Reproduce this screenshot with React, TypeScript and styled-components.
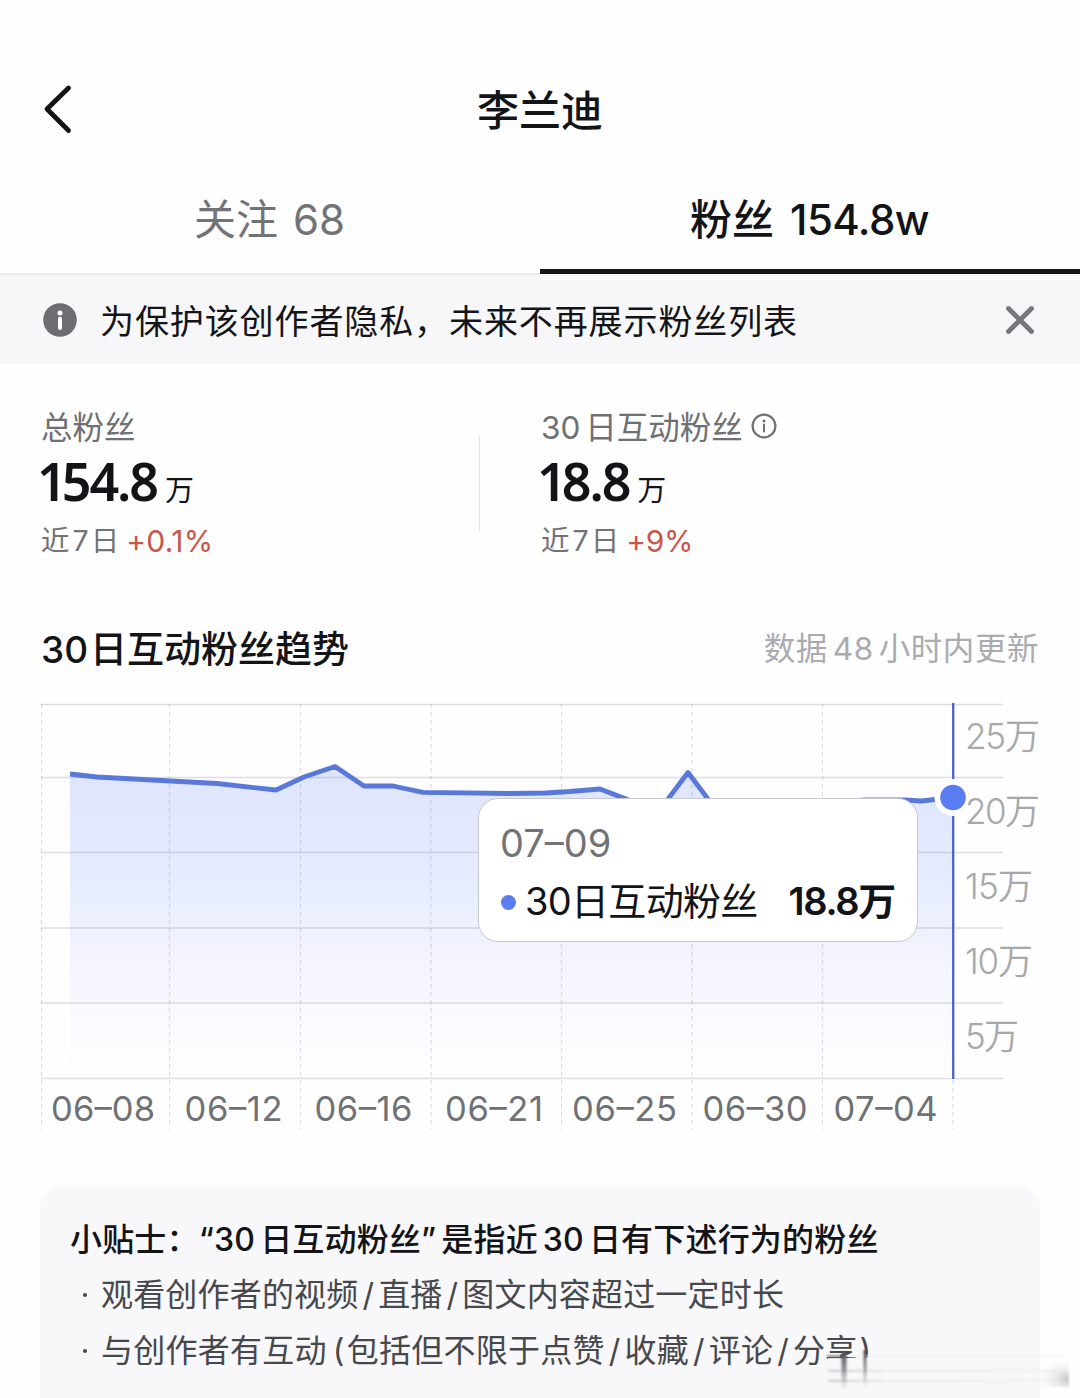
import React from "react";
import styled, { createGlobalStyle } from "styled-components";

const GlobalStyle = createGlobalStyle`
  * { box-sizing: border-box; }
  body {
    margin: 0;
    background: #fefefe;
    font-family: Inter, "Noto Sans CJK SC", sans-serif;
    color: #161823;
  }
`;

const Page = styled.main`
  width: 1080px;
  height: 1398px;
  display: flex;
  flex-direction: column;
  position: relative;
  overflow: hidden;
`;

/* Single line of text with tunable size, weight and tracking. */
const Text = styled.span<{ $size: number; $color?: string; $weight?: number; $track?: number }>`
  font-size: ${(p) => p.$size}px;
  color: ${(p) => p.$color ?? "#131418"};
  font-weight: ${(p) => p.$weight ?? 400};
  letter-spacing: ${(p) => p.$track ?? 0}px;
  line-height: 1;
  white-space: pre;
`;

const BigNumber = styled.span`
  font-family: "Noto Sans", "Open Sans", sans-serif;
  font-size: 52px;
  font-weight: 600;
  line-height: 62px;
  letter-spacing: -2.1px;
  margin-left: -4px;
  color: #131418;
`;

const LeadDigit = styled.span`
  letter-spacing: -5px;
`;

const Unit = styled.span`
  font-size: 29px;
  line-height: 1;
  margin-left: 8px;
  color: #131418;
`;

const Gap = styled.span<{ $w: number }>`
  display: inline-block;
  width: ${(p) => p.$w}px;
  letter-spacing: 0;
`;

const Header = styled.header`
  height: 174px;
  padding: 44px 43px 0;
  display: grid;
  grid-template-columns: 30px 1fr 30px;
  align-items: center;
  justify-items: center;
`;

const HeaderTitle = styled.h1`
  margin: 4px 0 0;
  font-size: 42px;
  font-weight: 500;
  line-height: 1;
  color: #131418;
`;

const Tabs = styled.nav`
  height: 101px;
  display: grid;
  grid-template-columns: 1fr 1fr;
`;

const Tab = styled.div<{ $active?: boolean }>`
  display: flex;
  align-items: center;
  justify-content: center;
  padding-bottom: ${(p) => (p.$active ? 3 : 7)}px;
  padding-right: 1px;
  border-bottom: ${(p) => (p.$active ? "5px solid #141518" : "2px solid #ececee")};
  margin-bottom: ${(p) => (p.$active ? 1 : 0)}px;
`;

const Notice = styled.section`
  height: 89px;
  background: #f7f7f9;
  padding: 0 45px 0 43px;
  display: flex;
  align-items: center;
`;

const NoticeText = styled.div`
  flex: 1;
  padding: 5px 0 0 23px;
`;

const Stats = styled.section`
  height: 250px;
  padding: 41px 41px 0;
  display: grid;
  grid-template-columns: 438px 62px 1fr;
`;

const Stat = styled.div`
  display: flex;
  flex-direction: column;
`;

const StatLabel = styled.div`
  height: 45px;
  display: flex;
  align-items: center;

  svg {
    margin: 0 0 3px 8px;
  }
`;

const StatValue = styled.div`
  height: 67px;
  display: flex;
  align-items: baseline;
`;

const StatTrend = styled.div`
  height: 48px;
  display: flex;
  align-items: center;
`;

const Divider = styled.div`
  width: 1px;
  height: 96px;
  margin-top: 30px;
  background: #e4e4e6;
`;

const SectionHead = styled.section`
  height: 70px;
  padding: 0 41px;
  display: flex;
  align-items: center;
  justify-content: space-between;
`;

const ChartBox = styled.section`
  height: 502px;
  position: relative;
`;

const Tooltip = styled.div`
  position: absolute;
  left: 478px;
  top: 114px;
  width: 440px;
  height: 144px;
  border: 1.5px solid #c6c8d2;
  border-radius: 20px;
  background: #fff;
  padding: 19px 21px 0;
`;

const TooltipRow = styled.div`
  display: flex;
  align-items: center;
  height: 50px;
`;

const TooltipDate = styled(TooltipRow)`
  margin-bottom: 8px;
`;

const Dot = styled.i`
  flex: none;
  width: 15px;
  height: 15px;
  border-radius: 50%;
  background: #5b7df0;
  margin: 2px 9px 0 1px;
`;

const Tips = styled.section`
  margin: 0 40px;
  flex: 1;
  background: #f8f8fa;
  border-radius: 22px 22px 0 0;
  padding: 26px 31px 0 30px;
  display: flex;
  flex-direction: column;
`;

const TipLine = styled.div`
  height: 55.5px;
  display: flex;
  align-items: center;
`;

const Bullet = styled.i`
  width: 4px;
  height: 4px;
  border-radius: 50%;
  background: #47484c;
  margin: 0 14px 0 13px;
`;

const Smudge = styled.svg`
  position: absolute;
  left: 820px;
  top: 1340px;
`;

const FONT = 'Inter, "Noto Sans CJK SC", sans-serif';
const ROWS = [21.5, 94.5, 169.5, 245, 320, 395.5];
const COLS = [41.5, 169.5, 300.5, 431, 561.5, 692, 822.5, 953];
const DATES: [string, number, number][] = [
  ["06–08", 51, 104],
  ["06–12", 184.5, 98],
  ["06–16", 314.5, 98],
  ["06–21", 445, 98],
  ["06–25", 572, 105],
  ["06–30", 702.5, 105],
  ["07–04", 833.5, 104],
];
const AMOUNTS: [string, number, number][] = [
  ["25", 66, 73],
  ["20", 140.5, 73],
  ["15", 216, 66],
  ["10", 291, 66],
  ["5", 366, 52],
];
const TREND =
  "70,91 97,94 217,100.5 276,107 304,94 335,83.5 364,103 393,103 423,109.3 510,110.5 545,110 570,108.5 600,106 630,117.5 650,126 662,124 688,89.5 714,124 760,126 840,119 865,116.9 905,116.9 921,118 953,114.5";

function Chart() {
  return (
    <svg width="1080" height="502" viewBox="0 1 1080 502" fontFamily={FONT}>
      <defs>
        <linearGradient id="area" x1="0" y1="83" x2="0" y2="395" gradientUnits="userSpaceOnUse">
          <stop offset="0" stopColor="#dfe4fc" />
          <stop offset="0.35" stopColor="#e5ecfe" />
          <stop offset="0.62" stopColor="#f3f4fe" />
          <stop offset="0.85" stopColor="#fbfbff" />
          <stop offset="1" stopColor="#fefefe" />
        </linearGradient>
      </defs>
      <polygon points={`70,395 ${TREND} 953,395`} fill="url(#area)" />
      {ROWS.map((y) => (
        <line key={y} x1="41" x2="1003" y1={y} y2={y} stroke="#5a5f78" strokeOpacity="0.2" strokeWidth="1.3" />
      ))}
      {COLS.map((x) => (
        <line key={x} x1={x} x2={x} y1="21" y2="446" stroke="#5a5f78" strokeOpacity="0.22" strokeWidth="1.2" strokeDasharray="4 4" />
      ))}
      <polyline points={TREND} fill="none" stroke="#5878da" strokeWidth="4.8" strokeLinejoin="round" />
      <line x1="953.2" x2="953.2" y1="20" y2="396" stroke="#4f68c6" strokeWidth="2.4" />
      <circle cx="953" cy="114.5" r="18.5" fill="#fefefe" />
      <circle cx="953" cy="114.5" r="12.8" fill="#5b7df2" />
      {AMOUNTS.map(([n, y, w]) => (
        <text key={n} x="965" y={y} fontSize="35" fontWeight="330" fill="#a7a8ac" textLength={w + 2}>
          {n}万
        </text>
      ))}
      {DATES.map(([d, x, w]) => (
        <text key={d} x={x} y="438" fontSize="34.5" fill="#707175" fontWeight="380" textLength={w}>
          {d}
        </text>
      ))}
    </svg>
  );
}

export default function App() {
  return (
    <Page>
      <GlobalStyle />
      <Header>
        <svg width="30" height="50" viewBox="0 0 30 50" fill="none">
          <path d="M25.5 4 L4 25 L25.5 46.5" stroke="#131418" strokeWidth="4.8" strokeLinecap="round" strokeLinejoin="round" />
        </svg>
        <HeaderTitle>李兰迪</HeaderTitle>
      </Header>

      <Tabs>
        <Tab>
          <Text $size={42} $color="#727377" $weight={370}>关注<Gap $w={15} />68</Text>
        </Tab>
        <Tab $active>
          <Text $size={42} $weight={500}>粉丝</Text>
          <Gap $w={16} />
          <Text $size={42} $weight={500} $track={-0.6}>154.8w</Text>
        </Tab>
      </Tabs>

      <Notice>
        <svg width="34" height="34" viewBox="0 0 34 34">
          <circle cx="17" cy="17" r="16.8" fill="#6d6e71" />
          <circle cx="17" cy="10" r="2.5" fill="#fff" />
          <path d="M17 15.8V25" stroke="#fff" strokeWidth="4" strokeLinecap="round" />
        </svg>
        <NoticeText>
          <Text $size={34} $track={0.9}>为保护该创作者隐私，未来不再展示粉丝列表</Text>
        </NoticeText>
        <svg width="30" height="30" viewBox="0 0 30 30">
          <path d="M3.5 3.5 L26.5 26.5 M26.5 3.5 L3.5 26.5" stroke="#77787b" strokeWidth="4.8" strokeLinecap="round" />
        </svg>
      </Notice>

      <Stats>
        <Stat>
          <StatLabel>
            <Text $size={31.5} $color="#6f7074" $weight={370}>总粉丝</Text>
          </StatLabel>
          <StatValue>
            <BigNumber><LeadDigit>1</LeadDigit>54.8</BigNumber>
            <Unit>万</Unit>
          </StatValue>
          <StatTrend>
            <Text $size={28.5} $color="#727377" $weight={370}>近<Gap $w={3} />7<Gap $w={2} />日</Text>
            <Gap $w={7} />
            <Text $size={30} $color="#c8564a" $track={0.3}>+0.1%</Text>
          </StatTrend>
        </Stat>
        <Divider />
        <Stat>
          <StatLabel>
            <Text $size={31.5} $color="#6f7074" $weight={370}>30<Gap $w={5} />日互动粉丝</Text>
            <svg width="26" height="26" viewBox="0 0 26 26" fill="none">
              <circle cx="13" cy="13" r="11.4" stroke="#6f7074" strokeWidth="2.2" />
              <circle cx="13" cy="8" r="1.5" fill="#6f7074" />
              <path d="M13 11.5V18.5" stroke="#6f7074" strokeWidth="2" strokeLinecap="round" />
            </svg>
          </StatLabel>
          <StatValue>
            <BigNumber><LeadDigit>1</LeadDigit>8.8</BigNumber>
            <Unit>万</Unit>
          </StatValue>
          <StatTrend>
            <Text $size={28.5} $color="#727377" $weight={370}>近<Gap $w={3} />7<Gap $w={2} />日</Text>
            <Gap $w={7} />
            <Text $size={30} $color="#c8564a" $track={-0.3}>+9%</Text>
          </StatTrend>
        </Stat>
      </Stats>

      <SectionHead>
        <Text $size={37} $weight={500}>30<Gap $w={2} />日互动粉丝趋势</Text>
        <Text $size={31.5} $color="#aaabaf" $weight={370} $track={0.55}>数据<Gap $w={5} />48<Gap $w={5} />小时内更新</Text>
      </SectionHead>

      <ChartBox>
        <Chart />
        <Tooltip>
          <TooltipDate>
            <Text $size={38} $color="#727377" $weight={370}>07–09</Text>
          </TooltipDate>
          <TooltipRow>
            <Dot />
            <Text $size={38} $track={-0.7}>30日互动粉丝</Text>
            <Gap $w={31} />
            <Text $size={38} $weight={600} $track={-1.3}>18.8万</Text>
          </TooltipRow>
        </Tooltip>
      </ChartBox>

      <Tips>
        <TipLine>
          <Text $size={32} $weight={500} $track={0.18}>小贴士：“30<Gap $w={5} />日互动粉丝”<Gap $w={5} />是指近<Gap $w={5} />30<Gap $w={5} />日有下述行为的粉丝</Text>
        </TipLine>
        <TipLine>
          <Bullet />
          <Text $size={32} $color="#47484c" $weight={370} $track={0.18}>观看创作者的视频<Gap $w={4} />/<Gap $w={4} />直播<Gap $w={4} />/<Gap $w={4} />图文内容超过一定时长</Text>
        </TipLine>
        <TipLine>
          <Bullet />
          <Text $size={32} $color="#47484c" $weight={370} $track={0.25}>与创作者有互动<Gap $w={6} />(<Gap $w={2} />包括但不限于点赞<Gap $w={4} />/<Gap $w={4} />收藏<Gap $w={4} />/<Gap $w={4} />评论<Gap $w={4} />/<Gap $w={4} />分享<Gap $w={2} />)</Text>
        </TipLine>
      </Tips>

      <Smudge width="260" height="58" viewBox="0 0 260 58">
        <defs>
          <linearGradient id="down" x1="0" y1="0" x2="0" y2="1">
            <stop offset="0" stopColor="#4a4b4f" />
            <stop offset="0.45" stopColor="#77787c" stopOpacity="0.8" />
            <stop offset="1" stopColor="#9a9a9e" stopOpacity="0" />
          </linearGradient>
          <radialGradient id="tail" cx="1" cy="0.7" r="0.75">
            <stop offset="0" stopColor="#c2c2c4" />
            <stop offset="0.35" stopColor="#dededf" stopOpacity="0.8" />
            <stop offset="1" stopColor="#f4f4f5" stopOpacity="0" />
          </radialGradient>
          <linearGradient id="streak" x1="0" y1="0" x2="1" y2="0">
            <stop offset="0" stopColor="#bcbcc0" />
            <stop offset="0.25" stopColor="#e6e6ea" />
            <stop offset="1" stopColor="#f0f0f3" />
          </linearGradient>
          <filter id="soft" x="-20%" y="-50%" width="140%" height="200%">
            <feGaussianBlur stdDeviation="0.9" />
          </filter>
        </defs>
        <rect x="8" y="18" width="212" height="28" fill="#f8f8fa" />
        <g filter="url(#soft)">
          <rect x="8" y="30" width="230" height="1.6" fill="url(#streak)" />
          <rect x="8" y="40" width="225" height="1.6" fill="url(#streak)" />
          <rect x="7" y="15.5" width="16" height="1.8" fill="#66676b" />
          <rect x="30" y="16" width="215" height="1.2" fill="#ededf0" />
          <rect x="21.5" y="12" width="5" height="38" fill="url(#down)" />
          <rect x="43.5" y="10" width="3" height="38" fill="url(#down)" />
          <rect x="205" y="20" width="44" height="27" fill="url(#tail)" />
        </g>
      </Smudge>
    </Page>
  );
}
